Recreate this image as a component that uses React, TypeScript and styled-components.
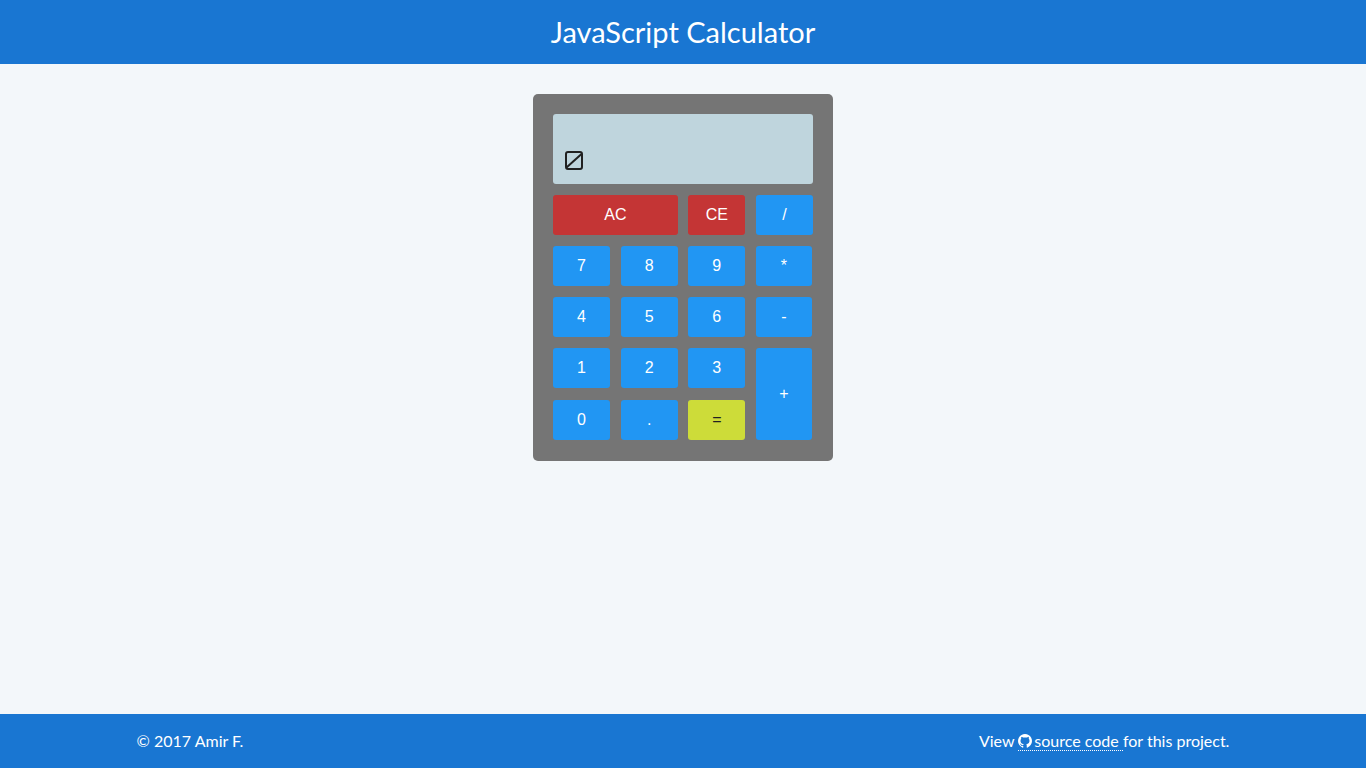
import React, { useState } from "react";
import styled, { createGlobalStyle } from "styled-components";

const GlobalStyle = createGlobalStyle`
  *, *::before, *::after { box-sizing: border-box; }
  body {
    margin: 0;
    background: #f3f7fa;
    color: #212121;
    font-family: Lato, sans-serif;
    font-size: 16px;
    line-height: 24px;
  }
`;

const Page = styled.div`
  min-height: 100vh;
  display: flex;
  flex-direction: column;
`;

const Header = styled.header`
  padding: 13px 20px;
  background: #1976d2;
  color: #fff;
  text-align: center;
`;

const Title = styled.h1`
  margin: 0;
  font-size: 29px;
  font-weight: 400;
  line-height: 38px;
`;

const Main = styled.main`
  flex: 1;
  display: flex;
  justify-content: center;
  align-items: flex-start;
  padding: 30px 0;
`;

const Calculator = styled.section`
  width: 300px;
  padding: 20px 20px 21px;
  border-radius: 5px;
  background: #757575;
`;

const Display = styled.output`
  display: flex;
  align-items: flex-end;
  height: 70px;
  margin-bottom: 11px;
  padding: 11px;
  border-radius: 3px;
  background: #bfd5dd;
  font-size: 24px;
`;

const Keys = styled.div`
  display: grid;
  grid-template-columns: repeat(4, 57px);
  grid-template-rows: 40px 40px 40px 41px 40px;
  justify-content: space-between;
  row-gap: 11px;
`;

type Tone = "clear" | "normal" | "equals";

const tones: Record<Tone, string> = {
  clear: "#c43535",
  normal: "#2196f3",
  equals: "#cddc39",
};

const Key = styled.button<{ $tone?: Tone; $wide?: boolean; $tall?: boolean; $slim?: boolean }>`
  grid-column: ${(p) => (p.$wide ? "span 2" : "auto")};
  grid-row: ${(p) => (p.$tall ? "span 2" : "auto")};
  width: ${(p) => (p.$slim ? "56px" : "auto")};
  height: ${(p) => (p.$tall ? "auto" : "40px")};
  padding: 0;
  border: 0;
  border-radius: 3px;
  background: ${(p) => tones[p.$tone ?? "normal"]};
  color: ${(p) => (p.$tone === "equals" ? "#212121" : "#fff")};
  font-family: "Liberation Sans", Arial, sans-serif;
  font-size: 16px;
  cursor: pointer;
`;

const Footer = styled.footer`
  padding: 15px 10%;
  display: flex;
  justify-content: space-between;
  background: #1976d2;
  color: #fff;
`;

const FooterText = styled.p`
  margin: 0;
`;

const SourceLink = styled.a`
  color: inherit;
  text-decoration: none;
  border-bottom: 1px dotted #fff;
`;

const GithubIcon = styled.svg`
  width: 14px;
  height: 14px;
  margin-right: 2px;
  vertical-align: -1px;
  fill: currentColor;
`;

const EmptyMark = styled.svg`
  width: 20px;
  height: 20px;
  margin-bottom: 3px;
  fill: none;
  stroke: #212121;
  stroke-width: 2;
`;

interface KeyDef {
  label: string;
  tone?: Tone;
  wide?: boolean;
  tall?: boolean;
  slim?: boolean;
}

const keys: KeyDef[] = [
  { label: "AC", tone: "clear", wide: true },
  { label: "CE", tone: "clear" },
  { label: "/" },
  { label: "7" },
  { label: "8" },
  { label: "9" },
  { label: "*", slim: true },
  { label: "4" },
  { label: "5" },
  { label: "6" },
  { label: "-", slim: true },
  { label: "1" },
  { label: "2" },
  { label: "3" },
  { label: "+", tall: true, slim: true },
  { label: "0" },
  { label: "." },
  { label: "=", tone: "equals" },
];

function calculate(expression: string): string {
  const tokens = expression.match(/\d*\.?\d+|[-+*/]/g) ?? [];
  const terms: number[] = [];
  let operator = "+";
  for (const token of tokens) {
    if (/^[-+*/]$/.test(token)) {
      operator = token;
      continue;
    }
    const value = Number(token);
    if (operator === "+") terms.push(value);
    else if (operator === "-") terms.push(-value);
    else if (operator === "*") terms.push((terms.pop() ?? 0) * value);
    else terms.push((terms.pop() ?? 0) / value);
  }
  return String(terms.reduce((sum, n) => sum + n, 0));
}

export default function App() {
  const [entry, setEntry] = useState("");

  const press = (label: string) => {
    if (label === "AC") setEntry("");
    else if (label === "CE") setEntry((e) => e.slice(0, -1));
    else if (label === "=") setEntry((e) => calculate(e));
    else setEntry((e) => e + label);
  };

  return (
    <Page>
      <GlobalStyle />
      <Header>
        <Title>JavaScript Calculator</Title>
      </Header>
      <Main>
        <Calculator aria-label="Calculator">
          <Display>
            {entry || (
              <EmptyMark viewBox="0 0 20 20" aria-hidden="true">
                <rect x="2" y="2" width="16" height="17" rx="2" />
                <path d="M2.5 17.5 17.5 4" />
              </EmptyMark>
            )}
          </Display>
          <Keys>
            {keys.map((k) => (
              <Key
                key={k.label}
                type="button"
                $tone={k.tone}
                $wide={k.wide}
                $tall={k.tall}
                $slim={k.slim}
                onClick={() => press(k.label)}
              >
                {k.label}
              </Key>
            ))}
          </Keys>
        </Calculator>
      </Main>
      <Footer>
        <FooterText>© 2017 Amir F.</FooterText>
        <FooterText>
          View{" "}
          <SourceLink href="#source">
            <GithubIcon viewBox="0 128 1536 1536" aria-hidden="true">
              <path d="M768 128q209 0 385.5 103t279.5 279.5 103 385.5q0 251-146.5 451.5t-378.5 277.5q-27 5-40-7t-13-30q0-3 .5-76.5t.5-134.5q0-97-52-142 57-6 102.5-18t94-39 81-66.5 53-105 20.5-150.5q0-119-79-206 37-91-8-204-28-9-81 11t-92 44l-38 24q-93-26-192-26t-192 26q-16-11-42.5-27t-83.5-38.5-85-13.5q-45 113-8 204-79 87-79 206 0 85 20.5 150t52.5 105 80.5 67 94 39 102.5 18q-39 36-49 103-21 10-45 15t-57 5-65.5-21.5-55.5-62.5q-19-32-48.5-52t-49.5-24l-20-3q-21 0-29 4.5t-5 11.5 9 14 13 12l7 5q22 10 43.5 38t31.5 51l10 23q13 38 44 61.5t67 30 69.5 7 55.5-3.5l23-4q0 38 .5 88.5t.5 54.5q0 18-13 30t-40 7q-232-77-378.5-277.5t-146.5-451.5q0-209 103-385.5t279.5-279.5 385.5-103z" />
            </GithubIcon>
            source code{" "}
          </SourceLink>
          for this project.
        </FooterText>
      </Footer>
    </Page>
  );
}
